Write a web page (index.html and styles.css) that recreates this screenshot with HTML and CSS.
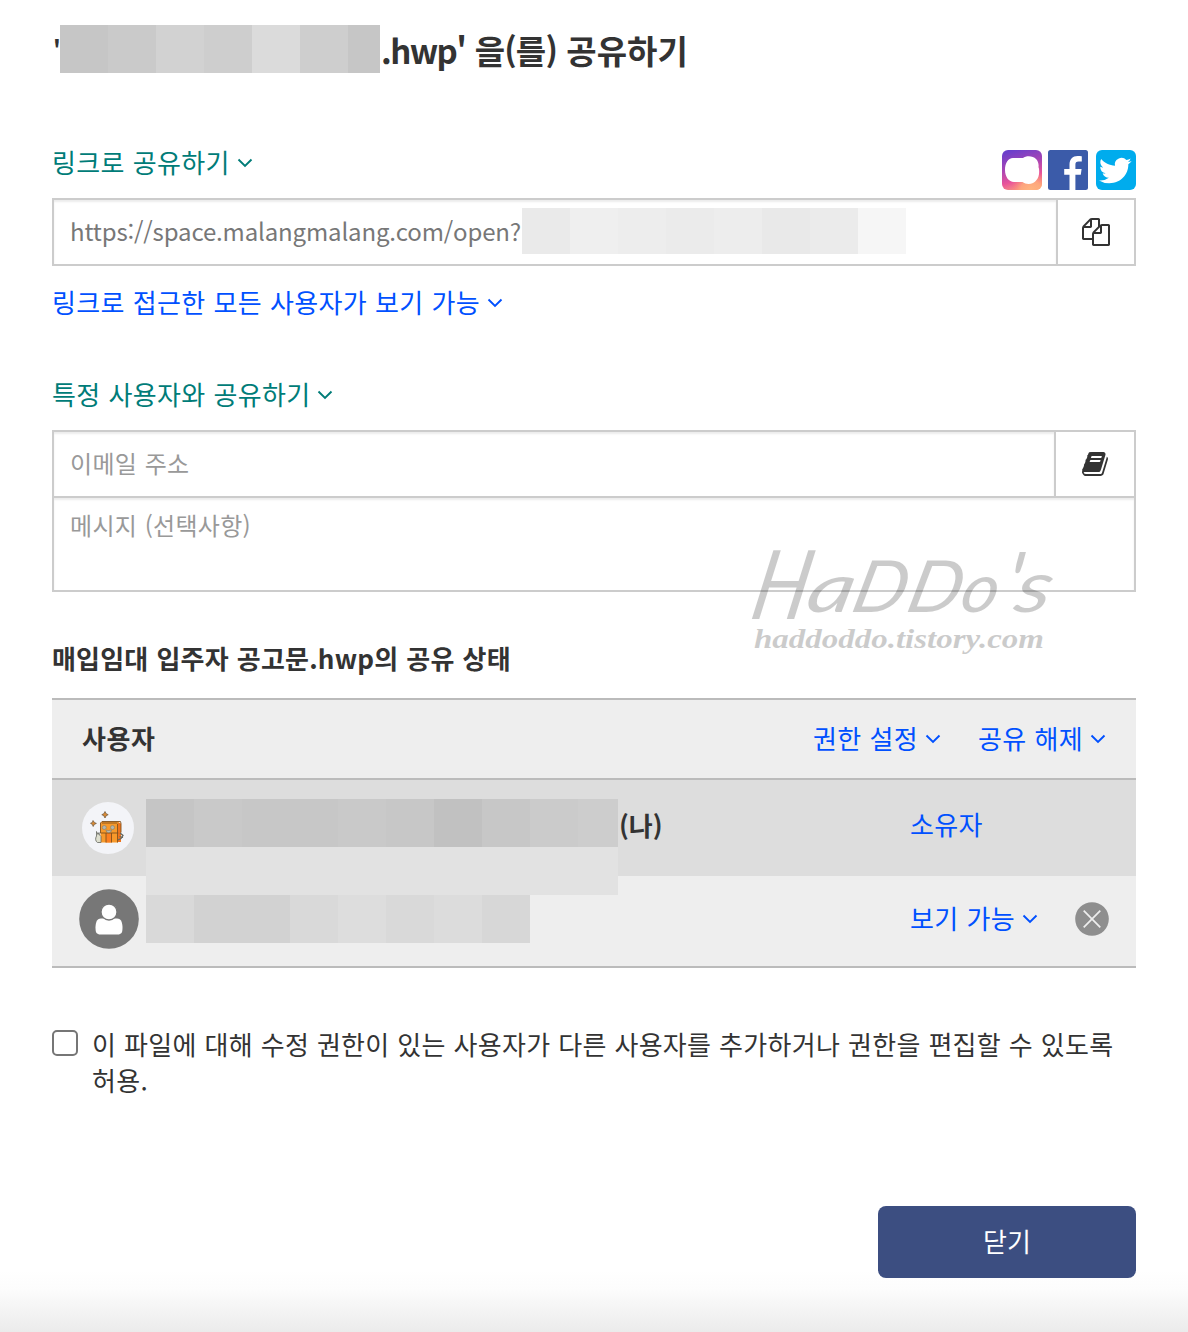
FILE: index.html
```html
<!DOCTYPE html>
<html lang="ko">
<head>
<meta charset="utf-8">
<title>공유하기</title>
<link rel="stylesheet" href="styles.css">
</head>
<body>
<svg class="defs" width="0" height="0" aria-hidden="true">
  <symbol id="chev" viewBox="0 0 16 10"><path d="M1.500 1.500 8 8l6.500-6.500" fill="none" stroke="currentColor" stroke-width="1.900"/></symbol>
</svg>
<main class="dialog">
  <h1 class="title"><span class="quote">'</span><span class="mosaic title-mask"><i class="g1"></i><i class="g2"></i><i class="g4"></i><i class="g3"></i><i class="g6"></i><i class="g3"></i><i class="g1"></i></span><span class="title-text"><span class="ext">.hwp'</span> <span class="particle">을(를)</span> 공유하기</span></h1>

  <section class="link-share">
    <div class="section-head">
      <a class="teal label">링크로 공유하기<svg class="chev"><use href="#chev"/></svg></a>
      <div class="social">
        <svg viewBox="0 0 40 40">
          <defs>
            <linearGradient id="ig" x1="0.300" y1="0" x2="0.600" y2="1"><stop offset="0" stop-color="#6b3fcb"/><stop offset=".4" stop-color="#a845b4"/><stop offset=".72" stop-color="#e9549a"/><stop offset="1" stop-color="#fba37c"/></linearGradient>
            <radialGradient id="ig2" cx=".72" cy="1" r=".5"><stop offset="0" stop-color="#ffb480"/><stop offset=".5" stop-color="#ffac7c" stop-opacity=".8"/><stop offset="1" stop-color="#f77" stop-opacity="0"/></radialGradient>
          </defs>
          <rect width="40" height="40" rx="6" fill="url(#ig)"/><rect width="40" height="40" rx="6" fill="url(#ig2)"/>
          <path d="M11 8h10c3-2.500 10-2.500 13 1 2 2 3 5 2.500 8 1.500 4 .5 11-2 13-3 4.500-10 5-14 2H12C7 32 3 27 3 20S6 8 11 8z" fill="#fff"/>
        </svg>
        <svg viewBox="0 0 40 40"><rect width="40" height="40" rx="2.500" fill="#3b5ba9"/><path d="M21.500 40V24.800H16.200V19h5.300v-4.300C21.500 9 24.700 6 29.600 6c1.800 0 3.500.1 4.200.3v5.200h-3.200c-2.400 0-3.200 1.200-3.200 3.200V19h6.200l-.8 5.800h-5.400V40z" fill="#fff"/></svg>
        <svg viewBox="0 0 40 40"><rect width="40" height="40" rx="6" fill="#00aced"/><path transform="translate(3 5) scale(1.360 1.300)" fill="#fff" d="M23.953 4.570a10 10 0 01-2.825.775 4.958 4.958 0 002.163-2.723c-.951.555-2.005.959-3.127 1.184a4.920 4.920 0 00-8.384 4.482C7.690 8.095 4.067 6.130 1.640 3.162a4.822 4.822 0 00-.666 2.475c0 1.710.87 3.213 2.188 4.096a4.904 4.904 0 01-2.228-.616v.06a4.923 4.923 0 003.946 4.827 4.996 4.996 0 01-2.212.085 4.936 4.936 0 004.604 3.417 9.867 9.867 0 01-6.102 2.105c-.39 0-.779-.023-1.170-.067a13.995 13.995 0 007.557 2.209c9.053 0 13.998-7.496 13.998-13.985 0-.21 0-.42-.015-.63A9.935 9.935 0 0024 4.590z"/></svg>
      </div>
    </div>
    <div class="field link-field">
      <div class="cell url"><span class="url-text">https://space.malangmalang.com/open?</span><span class="mosaic url-mask"><i class="l2"></i><i class="l5"></i><i class="l4"></i><i class="l3"></i><i class="l4"></i><i class="l1"></i><i class="l3"></i><i class="l6"></i></span></div>
      <div class="cell button-cell"><svg class="fa" viewBox="0 0 1792 1792"><path d="M1696 384q40 0 68 28t28 68v1216q0 40-28 68t-68 28h-960q-40 0-68-28t-28-68v-288h-544q-40 0-68-28t-28-68v-672q0-40 20-88t48-76l408-408q28-28 76-48t88-20h416q40 0 68 28t28 68v328q68-40 128-40h416zm-544 213l-299 299h299v-299zm-640-384l-299 299h299v-299zm196 647l316-316v-416h-384v416q0 40-28 68t-68 28h-416v640h512v-256q0-40 20-88t48-76zm956 804v-1152h-384v416q0 40-28 68t-68 28h-416v640h896z"/></svg></div>
    </div>
    <a class="blue label scope">링크로 접근한 모든 사용자가 보기 가능<svg class="chev"><use href="#chev"/></svg></a>
  </section>

  <section class="user-share">
    <a class="teal label">특정 사용자와 공유하기<svg class="chev"><use href="#chev"/></svg></a>
    <div class="field mail-field">
      <div class="cell placeholder">이메일 주소</div>
      <div class="cell button-cell"><svg class="fa" viewBox="0 0 1792 1792"><path d="M1703 478q40 57 18 129l-275 906q-19 64-76.500 107.500t-122.500 43.500h-923q-77 0-148.500-53.500t-99.500-131.500q-24-67-2-127 0-4 3-27t4-37q1-8-3-21.500t-3-19.500q2-11 8-21t16.500-23.500 16.500-23.500q23-38 45-91.500t30-91.500q3-10 .5-30t-.5-28q3-11 17-28t17-23q21-36 42-92t25-90q1-9-2.500-32t.5-28q4-13 22-30.500t22-22.500q19-26 42.500-84.500t27.500-96.500q1-8-3-25.500t-2-26.500q2-8 9-18t18-23 17-21q8-12 16.500-30.500t15-35 16-36 19.500-32 26.500-23.500 36-11.500 47.500 5.500l-1 3q38-9 51-9h761q74 0 114 56t18 130l-274 906q-36 119-71.500 153.500t-128.500 34.500h-869q-27 0-38 15-11 16-1 43 24 70 144 70h923q29 0 56-15.500t35-41.500l300-987q7-22 5-57 38 15 59 43zm-1064 2q-4 13 2 22.500t20 9.500h608q13 0 25.500-9.500t16.500-22.500l21-64q4-13-2-22.500t-20-9.500h-608q-13 0-25.500 9.500t-16.500 22.500zm-83 256q-4 13 2 22.500t20 9.500h608q13 0 25.500-9.500t16.500-22.500l21-64q4-13-2-22.500t-20-9.500h-608q-13 0-25.500 9.500t-16.500 22.500z"/></svg></div>
    </div>
    <div class="message placeholder">메시지 (선택사항)</div>
  </section>

  <h2 class="status-title">매입임대 입주자 공고문.hwp의 공유 상태</h2>

  <section class="users">
    <div class="users-head">
      <strong>사용자</strong>
      <a class="blue label perm">권한 설정<svg class="chev"><use href="#chev"/></svg></a>
      <a class="blue label">공유 해제<svg class="chev"><use href="#chev"/></svg></a>
    </div>
    <div class="user owner">
      <svg class="avatar-owner" viewBox="0 0 52 52">
        <circle cx="26" cy="26" r="26" fill="#f3f4f8"/>
        <path d="M23 9.500l1.200 2.200 2 1-2 1-1.200 2.300-1.200-2.300-2-1 2-1zM11 18.500l1.400 2 2 .9-2.200 1-1 2.100-1-2.200-1.700-1 1.900-.9z" fill="#d98a35" stroke="#66513a" stroke-width=".7"/>
        <path d="M36 20l3 1.500v18.500h-5z" fill="#ef741c"/>
        <path d="M18.500 21l1.500-1.500h17.500L36 21.500v19H18.500z" fill="#f7992b"/>
        <path d="M24 31h5.500v9.500H24z" fill="#fb7f20"/>
        <path d="M18.500 31V21l1.500-1.500h18.500l.5 2v9M18.500 31h17.800M24 31v9.500M29.500 31v9.500M35.500 22v18.500M20 21h15.500" fill="none" stroke="#80501d" stroke-width=".9"/>
        <path d="M24 28c0 3.500 5.500 3.500 5.500 0l-3 .5z" fill="#b9b9ae" stroke="#777568" stroke-width=".6"/>
        <circle cx="22.300" cy="25.500" r="2" fill="#b3b6ad" stroke="#777568" stroke-width=".5"/><circle cx="30.500" cy="25.500" r="2" fill="#b3b6ad" stroke="#777568" stroke-width=".5"/>
        <path d="M14.500 29.500l1.500 3 1-2 .5 2.500 1.500 1.500v6h-3.500c-2-1-2.500-4-1-6.500z" fill="#dedfcf" stroke="#65675f" stroke-width=".8"/>
        <path d="M38 31l3 2.500-2 3-3 1.500M37.500 34.500l3.500 1" fill="none" stroke="#65675f" stroke-width="1.300"/>
      </svg>
      <strong class="me">(나)</strong>
      <a class="blue label role">소유자</a>
      <div class="name-mask">
        <span class="mosaic"><i class="n1"></i><i class="n3"></i><i class="n2"></i><i class="n2"></i><i class="n3"></i><i class="n2"></i><i class="n0"></i><i class="n2"></i><i class="n4"></i><i class="n5"></i></span>
        <span class="band"></span>
        <span class="mosaic guest-mask"><i class="m3"></i><i class="m1"></i><i class="m1"></i><i class="m3"></i><i class="m5"></i><i class="m3"></i><i class="m4"></i><i class="m2"></i></span>
      </div>
    </div>
    <div class="user guest">
      <svg class="avatar-guest" viewBox="0 0 60 60"><circle cx="30" cy="30" r="29.800" fill="#777"/><path d="M22 29.500h16c4.500 0 5.500 5 5.500 9 0 5-1 7-5 7h-17c-4 0-5-2-5-7 0-4 1-9 5.500-9z" fill="#fff"/><circle cx="30" cy="23" r="8" fill="#fff" stroke="#777" stroke-width="1.300"/></svg>
      <a class="blue label role">보기 가능<svg class="chev"><use href="#chev"/></svg></a>
      <svg class="remove" viewBox="0 0 34 34"><circle cx="17" cy="17" r="16.800" fill="#8e8e8e"/><path d="M8.700 8.700l16.600 16.600M25.300 8.700L8.700 25.300" stroke="#eee" stroke-width="1.700"/></svg>
    </div>
  </section>

  <label class="allow"><input type="checkbox"><span>이 파일에 대해 수정 권한이 있는 사용자가 다른 사용자를 추가하거나 권한을 편집할 수 있도록 허용.</span></label>

  <footer class="actions"><button type="button">닫기</button></footer>

  <svg class="watermark" viewBox="0 0 310 120">
    <g class="wm-name">
      <text transform="translate(-3 74) skewX(-12) scale(.82 1)" font-size="96">H</text>
      <text transform="translate(53 67) skewX(-12) scale(1.350 1)" font-size="68">a</text>
      <text transform="translate(98 67) skewX(-14) scale(1.050 1)" font-size="72">D</text>
      <text transform="translate(153 67) skewX(-14) scale(1.050 1)" font-size="72">D</text>
      <text transform="translate(207 67) skewX(-12) scale(1.050 1)" font-size="68">o</text>
      <text transform="translate(251 67) skewX(-8)" font-size="84">'</text>
      <text transform="translate(261 67) skewX(-12) scale(1.250 1)" font-size="72">s</text>
    </g>
    <text class="wm-site" x="3" y="103" textLength="290" lengthAdjust="spacingAndGlyphs">haddoddo.tistory.com</text>
  </svg>
</main>
</body>
</html>
```

FILE: styles.css
```css
* { box-sizing: border-box; }
body {
  margin: 0;
  background: #fff;
  color: #333;
  font-family: "Noto Sans CJK KR", "Noto Sans", sans-serif;
  font-size: 26px;
  line-height: 36px;
  letter-spacing: .3px;
  word-spacing: .5px;
}
.defs { position: absolute; }
.dialog {
  position: relative;
  height: 1332px;
  padding: 25px 52px 0;
  background: linear-gradient(#fff 1270px, #fcfcfc 1290px, #ebebeb 1332px);
}
.title {
  display: flex;
  align-items: center;
  height: 48px;
  margin: 0;
  font-size: 33px;
  font-weight: 700;
  letter-spacing: 0;
  word-spacing: 0;
  white-space: nowrap;
}
.quote { width: 8px; padding: 2px 0 0 1px; font-size: 24px; }
.title-mask { width: 320px; height: 48px; }
.title-text { margin: 2px 0 0 1px; }
.ext { letter-spacing: -1.6px; }
.particle { letter-spacing: -.8px; }
.mosaic { display: flex; height: 48px; overflow: hidden; }
.mosaic i { flex: 0 0 48px; }
.g1 { background: #c6c6c6; } .g2 { background: #cacaca; } .g3 { background: #cecece; }
.g4 { background: #d2d2d2; } .g6 { background: #dbdbdb; }
.l1 { background: #e9e9e9; } .l2 { background: #eaeaea; } .l3 { background: #ebebeb; }
.l4 { background: #ededed; } .l5 { background: #efefef; } .l6 { background: #f6f6f6; }
.n0 { background: #c1c1c1; } .n1 { background: #c5c5c5; } .n2 { background: #c7c7c7; }
.n3 { background: #c9c9c9; } .n4 { background: #cbcbcb; } .n5 { background: #cdcdcd; }
.m1 { background: #d2d2d2; } .m2 { background: #d7d7d7; } .m3 { background: #d9d9d9; }
.m4 { background: #dcdcdc; } .m5 { background: #ddd; }

.label { display: inline-flex; align-items: center; height: 36px; padding-bottom: 2px; white-space: pre; }
.teal { color: #007c78; }
.blue { color: #0050ff; }
.chev { width: 16px; height: 10px; margin: 2px 0 0 7px; }

.link-share { margin-top: 72px; }
.section-head { display: flex; justify-content: space-between; height: 53px; }
.social { display: flex; gap: 7px; padding-top: 5px; }
.social svg { width: 40px; height: 40px; }
.social svg:first-child { margin-right: -1px; }
.social svg:last-child { margin-left: 1px; }
.field { display: flex; height: 68px; border: 2px solid #ccc; }
.cell { display: flex; align-items: center; }
.cell:first-child { flex: 1; padding: 0 0 2px 16px; box-shadow: inset 0 2px 2px rgba(0, 0, 0, .075); }
.button-cell { justify-content: center; width: 78px; border-left: 2px solid #ccc; }
.mail-field .button-cell { width: 80px; }
.fa { width: 28px; height: 28px; fill: #333; }
.url-text { width: 452px; color: #777; font-size: 24px; letter-spacing: -.15px; white-space: nowrap; }
.url-mask { height: 46px; }
.scope { margin-top: 19px; }
.user-share { display: flex; flex-direction: column; margin-top: 56px; }
.mail-field { margin-top: 17px; }
.placeholder { color: #999; font-size: 24px; }
.message {
  height: 96px;
  margin-top: -2px;
  padding: 9px 16px;
  border: 2px solid #ccc;
  box-shadow: inset 0 2px 2px rgba(0, 0, 0, .075);
}
.status-title { margin: 48px 0 22px; font-size: 26px; font-weight: 700; line-height: 36px; letter-spacing: .2px; }

.users { border: solid #bbb; border-width: 2px 0; background: #eee; }
.users-head { display: flex; align-items: center; height: 80px; padding: 0 30px; border-bottom: 2px solid #bbb; }
.users-head strong { margin-top: -2px; letter-spacing: .6px; }
.perm { margin-left: auto; margin-right: 37px; }
.user { display: flex; align-items: center; }
.owner { position: relative; height: 96px; padding-left: 30px; background: #ddd; }
.avatar-owner { width: 52px; height: 52px; }
.me { width: 291px; margin: -6px 0 0 485px; letter-spacing: 0; }
.owner .role { margin-top: -6px; }
.name-mask { position: absolute; top: 19px; left: 94px; z-index: 1; width: 472px; }
.band { display: block; height: 48px; background: #e2e2e2; }
.guest-mask { width: 384px; }
.guest { height: 90px; padding: 0 27px; }
.avatar-guest { width: 60px; height: 60px; margin-top: -4px; }
.guest .role { margin: -4px 0 0 771px; }
.remove { width: 34px; height: 34px; margin: -4px 0 0 auto; }

.allow { display: flex; gap: 14px; margin-top: 58px; word-spacing: .2px; }
.allow input {
  flex: none;
  width: 26px;
  height: 26px;
  margin: 4px 0 0;
  appearance: none;
  border: 2px solid #767676;
  border-radius: 5px;
  background: #fff;
}
.actions { display: flex; justify-content: flex-end; margin-top: 108px; }
.actions button {
  width: 258px;
  height: 72px;
  padding: 0 0 3px;
  border: 0;
  border-radius: 8px;
  background: #3c4e81;
  color: #fff;
  font: inherit;
}
.watermark { position: absolute; top: 545px; left: 751px; width: 310px; height: 120px; overflow: visible; fill: #000; opacity: .2; letter-spacing: 0; }
.wm-name { font-family: Lato, sans-serif; font-style: italic; font-weight: 400; }
.wm-site { font-family: "Liberation Serif", serif; font-size: 28px; font-style: italic; font-weight: 700; }
```
